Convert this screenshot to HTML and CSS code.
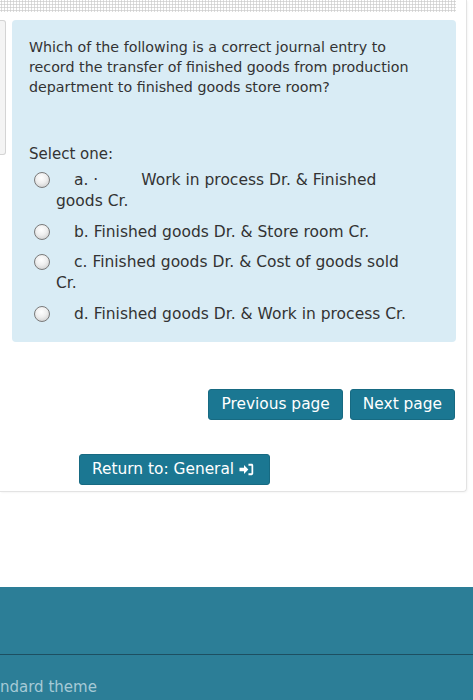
FILE: index.html
```html
<!DOCTYPE html>
<html>
<head>
    <title>Quiz</title>
    <meta name="viewport" content="width=device-width, initial-scale=1">
    <link rel="stylesheet" href="styles.css">
</head>

<body>
    <div class="card">
        <div class="dots"></div>

        <div class="question">
            <div class="info"></div>
            <div class="formulation">
                <p class="qtext">Which of the following is a correct journal entry to record the transfer of finished goods from production department to finished goods store room?</p>

                <p class="prompt">Select one:</p>
                <div class="answers">
                    <div class="option"><span class="radio"></span>a. &middot;<span class="tab"></span>Work in process Dr. &amp; Finished goods Cr.</div>
                    <div class="option"><span class="radio"></span>b. Finished goods Dr. &amp; Store room Cr.</div>
                    <div class="option"><span class="radio"></span>c. Finished goods Dr. &amp; Cost of goods sold Cr.</div>
                    <div class="option"><span class="radio"></span>d. Finished goods Dr. &amp; Work in process Cr.</div>
                </div>
            </div>
        </div>

        <div class="nav-buttons">
            <button type="button" class="btn">Previous page</button>
            <button type="button" class="btn">Next page</button>
        </div>

        <div class="return">
            <button type="button" class="btn">Return to: General
                <svg class="signin" width="15" height="13" viewBox="0 0 13 12">
                    <path d="M0 4.3h4.2V1.8l4 4.2-4 4.2V7.7H0z" fill="#fff"/>
                    <path d="M8.3 0.8h3c.8 0 1.4.6 1.4 1.4v7.6c0 .8-.6 1.4-1.4 1.4h-3V9.5h2.8V2.5H8.3z" fill="#fff"/>
                </svg>
            </button>
        </div>
    </div>

    <footer class="footer">
        <div class="footer-top"></div>
        <div class="footer-bottom">ndard theme</div>
    </footer>
</body>
</html>
```

FILE: styles.css
```css
html, body {
    margin: 0;
    padding: 0;
    background-color: #fff;
    font-family: "DejaVu Sans", Verdana, sans-serif;
    font-size: 15px;
    color: #333;
}

.card {
    width: 466px;
    height: 491px;
    border-right: 1px solid #e3e3e3;
    border-bottom: 1px solid #e3e3e3;
    border-bottom-right-radius: 4px;
    box-shadow: 1px 1px 2px rgba(0, 0, 0, 0.04);
}

.dots {
    width: 456px;
    height: 12px;
    background-image: radial-gradient(circle, #cfcfcf 0.9px, transparent 1.3px);
    background-size: 3px 3px;
}

.question {
    display: flex;
    margin-top: 8px;
}

.info {
    width: 5px;
    height: 133px;
    background-color: #f4f4f4;
    border: 1px solid #d4d4d4;
    border-left: none;
    border-radius: 0 3px 3px 0;
}

.formulation {
    width: 386px;
    margin-left: 6px;
    padding: 17px 41px 17px 17px;
    background-color: #d9ecf5;
    border-radius: 4px;
}

.qtext {
    margin: 0;
    font-size: 14.25px;
    line-height: 20px;
}

.prompt {
    margin: 47px 0 0;
    line-height: 20px;
}

.answers {
    margin-top: 6px;
    font-size: 15.5px;
}

.option {
    padding-left: 27px;
    text-indent: -22px;
    line-height: 21px;
    margin-bottom: 9.5px;
}

.option:last-child {
    margin-bottom: 0;
}

.radio {
    display: inline-block;
    width: 14px;
    height: 14px;
    margin-right: 24px;
    vertical-align: -3px;
    border: 1px solid #7a7a7a;
    border-radius: 50%;
    background: radial-gradient(circle at 45% 35%, #ffffff 0%, #eeeeee 45%, #c4c4c4 100%);
    text-indent: 0;
}

.tab {
    display: inline-block;
    width: 43px;
}

.nav-buttons {
    display: flex;
    justify-content: flex-end;
    gap: 7px;
    margin-top: 47px;
    padding-right: 11px;
}

.btn {
    height: 31px;
    padding: 0 12px;
    background-color: #1b7792;
    color: #fff;
    font-family: "DejaVu Sans", Verdana, sans-serif;
    font-size: 15.4px;
    border: 1px solid #176a82;
    border-radius: 3px;
}

.return {
    margin-top: 34px;
    padding-left: 79px;
}

.return .btn {
    padding-right: 15px;
}

.signin {
    vertical-align: -2px;
}

.footer {
    margin-top: 95px;
    background-color: #2c7e97;
    height: 113px;
}

.footer-top {
    height: 67px;
    border-bottom: 1px solid #1d4f61;
}

.footer-bottom {
    padding-top: 22px;
    color: #a6cad6;
    line-height: 20px;
}
```
